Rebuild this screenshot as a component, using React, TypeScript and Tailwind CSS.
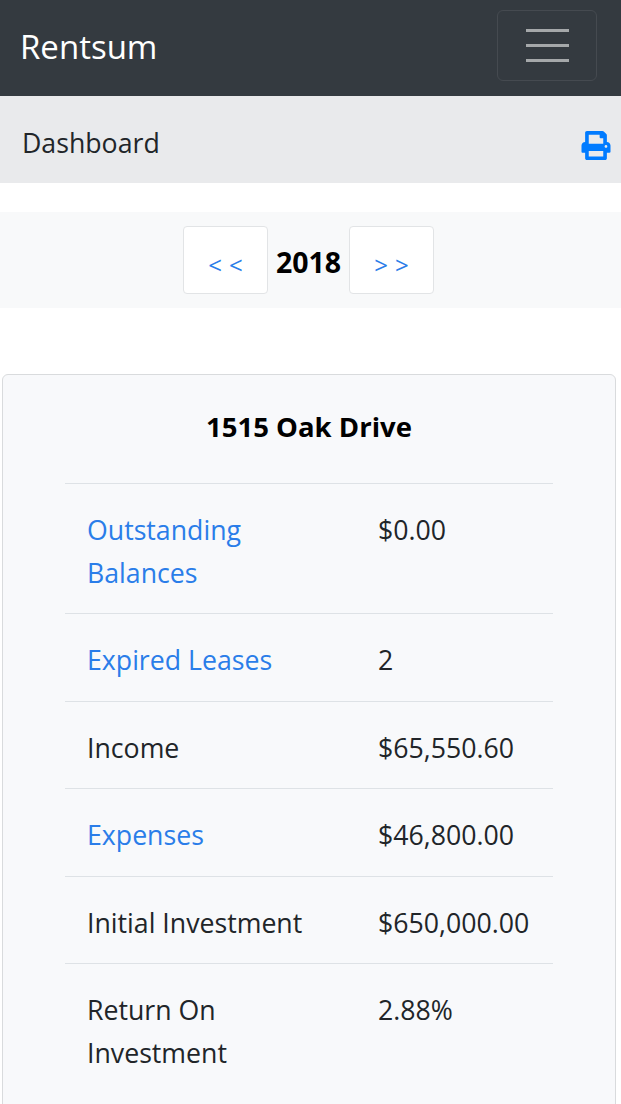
const rows = [
  { label: 'Outstanding Balances', value: '$0.00', link: true },
  { label: 'Expired Leases', value: '2', link: true },
  { label: 'Income', value: '$65,550.60', link: false },
  { label: 'Expenses', value: '$46,800.00', link: true },
  { label: 'Initial Investment', value: '$650,000.00', link: false },
  { label: 'Return On Investment', value: '2.88%', link: false },
];

export default function App() {
  return (
    <div className="h-[1104px] overflow-hidden bg-white font-['Open_Sans','Noto_Sans',sans-serif] text-[26.7px] leading-[43px] text-[#212529]">
      <nav className="flex h-[96px] items-center justify-between bg-[#343a40] pl-5 pr-6">
        <span className="mb-1 text-[33px] text-white">Rentsum</span>
        <button className="mb-[6px] flex h-[71px] w-[100px] flex-col items-center justify-center gap-3 rounded-md border border-[#454a50]">
          <span className="h-[3px] w-[43px] bg-[#a5a8aa]" />
          <span className="h-[3px] w-[43px] bg-[#a5a8aa]" />
          <span className="h-[3px] w-[43px] bg-[#a5a8aa]" />
        </button>
      </nav>

      <div className="flex h-[87px] items-center justify-between bg-[#e9eaec] pl-[22px] pr-[10px] pt-[6px]">
        <span>Dashboard</span>
        <svg className="mt-[6px] h-[29px] w-[30px] text-[#007bff]" viewBox="0 0 512 512" fill="currentColor">
          <path d="M448 192V77.25c0-8.49-3.37-16.62-9.37-22.63L393.37 9.37c-6-6-14.14-9.37-22.63-9.37H96C78.33 0 64 14.33 64 32v160c-35.35 0-64 28.65-64 64v112c0 8.84 7.16 16 16 16h48v96c0 17.67 14.33 32 32 32h320c17.67 0 32-14.33 32-32v-96h48c8.84 0 16-7.16 16-16V256c0-35.35-28.65-64-64-64zm-64 256H128v-96h256v96zm0-224H128V64h192v48c0 8.84 7.16 16 16 16h48v96zm48 72c-13.25 0-24-10.75-24-24 0-13.26 10.75-24 24-24s24 10.74 24 24c0 13.25-10.75 24-24 24z" />
        </svg>
      </div>

      <div className="mt-[29px] flex h-[96px] items-center justify-center bg-[#f8f9fa] pr-[4px]">
        <button className="h-[68px] w-[85px] rounded-sm border border-[#e2e4e6] bg-white pl-[7px] pt-[9px] text-[24px] tracking-[7px] text-[#2a7de9]">&lt;&lt;</button>
        <b className="mx-2 pt-1 text-[28.5px] font-bold text-black">2018</b>
        <button className="h-[68px] w-[85px] rounded-sm border border-[#e2e4e6] bg-white pl-[7px] pt-[9px] text-[24px] tracking-[7px] text-[#2a7de9]">&gt;&gt;</button>
      </div>

      <div className="mx-[2px] mt-[66px] w-[614px] rounded-md border border-[#d9dbdd] bg-[#f8f9fb] px-[62px] pb-10 pt-[30px]">
        <h2 className="pb-[34.5px] text-center text-[27.5px] font-bold text-black">1515 Oak Drive</h2>
        {rows.map((r) => (
          <div key={r.label} className="grid grid-cols-[291px_1fr] border-t border-[#dee2e6] pb-[19.6px] pl-[22px] pr-[23px] pt-6">
            <span className={r.link ? 'pr-10 text-[#2a7de9]' : 'pr-10'}>{r.label}</span>
            <span>{r.value}</span>
          </div>
        ))}
      </div>
    </div>
  );
}
